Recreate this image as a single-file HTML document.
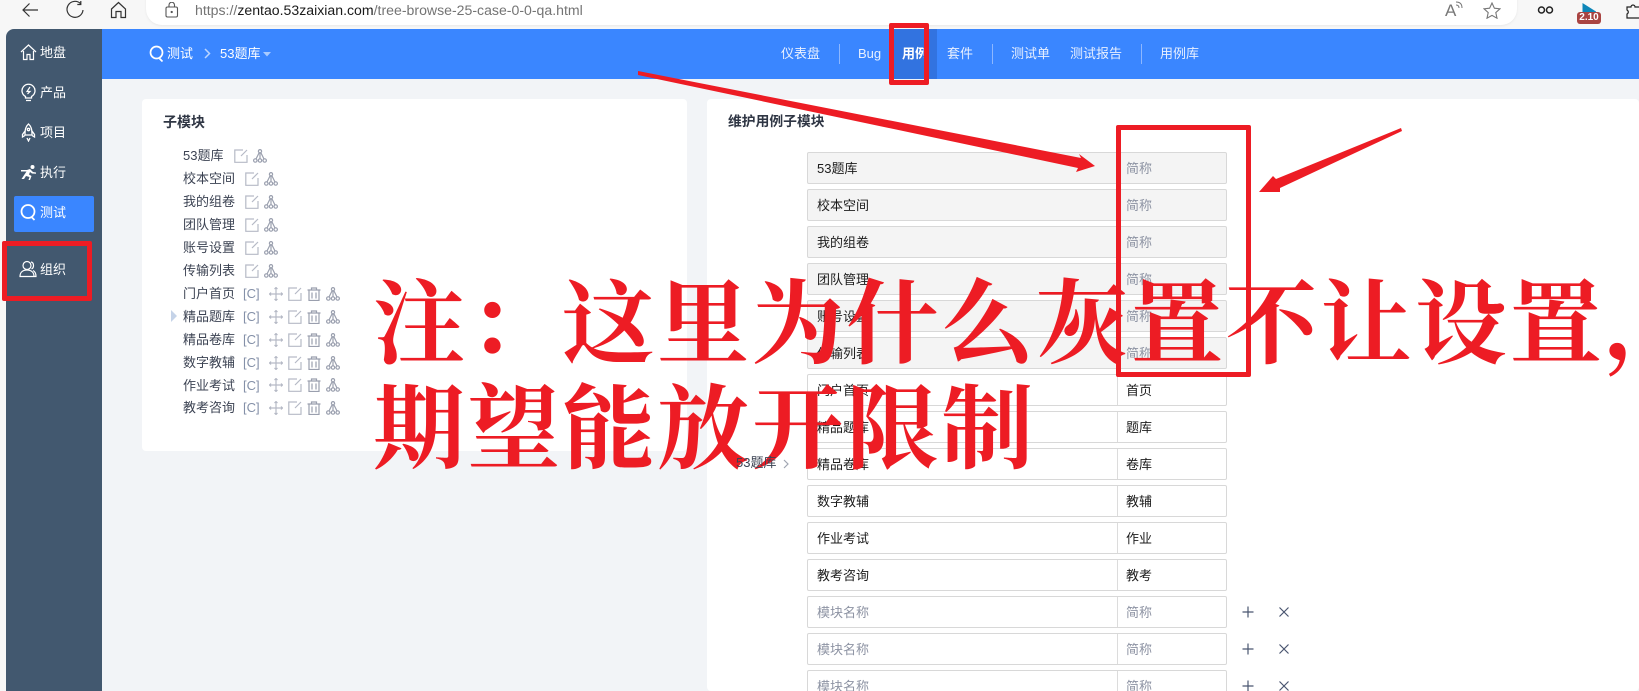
<!DOCTYPE html>
<html lang="zh"><head><meta charset="utf-8"><title>用例子模块</title>
<style>
*{box-sizing:border-box}
html,body{margin:0;padding:0;width:1639px;height:691px;overflow:hidden;background:#f7f7f7;font-family:"Liberation Sans","Noto Sans CJK SC",sans-serif;font-size:13px;color:#3c4353}
body{position:relative;contain:paint}
.a{position:absolute;white-space:nowrap}
#side{left:6px;top:29px;width:96px;height:662px;background:#42586f;border-radius:8px 0 0 0}
.ni{position:absolute;left:40px;color:#fff;font-size:13px;line-height:18px;white-space:nowrap}
#head{left:102px;top:29px;width:1537px;height:50px;background:#3a86ff}
#main{left:102px;top:79px;width:1537px;height:612px;background:#f2f4f7}
.card{background:#fff;border-radius:4px}
.nv{position:absolute;top:45px;line-height:18px;color:#e8f0ff;font-size:13px;white-space:nowrap}
.sp{position:absolute;top:44px;width:1px;height:20px;background:#8db7ff}
.t{position:absolute;left:183px;line-height:18px;color:#3c4353;white-space:nowrap}
.c{position:absolute;left:243px;line-height:18px;color:#8490a8;white-space:nowrap}
.row{position:absolute;left:807px;width:420px;height:32px;border:1px solid #d8d8d8;border-radius:2px;background:#fff;color:#1c1c1c;line-height:31px}
.row.d{background:#f4f4f4}
.row b{font-weight:400;position:absolute;left:9px;top:0}
.row i{font-style:normal;position:absolute;left:309px;top:0;height:30px;border-left:1px solid #dcdcdc;padding-left:8px;width:100px}
.row.d i{border-left-color:transparent}
.ph{color:#8d93a3}
.ic{position:absolute;fill:none;stroke:#b6bac6;stroke-width:1.2}
.big{position:absolute;left:373px;color:#ed1c24;font-family:"Noto Serif CJK SC","Liberation Serif",serif;font-weight:700;font-size:92px;letter-spacing:2.7px;line-height:105px;white-space:nowrap}
.rb{position:absolute;border:5px solid #ed1c24;border-radius:2px}
</style></head><body>
<svg width="0" height="0" style="position:absolute">
<symbol id="e" viewBox="0 0 14 14"><path d="M13 6v7.3H.8V1H9M13 1 7 7"/></symbol>
<symbol id="tr" viewBox="0 0 14 14"><circle cx="7" cy="2.2" r="1.6"/><circle cx="2.3" cy="11.5" r="1.7"/><circle cx="7" cy="11.5" r="1.7"/><circle cx="11.7" cy="11.5" r="1.7"/><path d="M7 4v6M6 4 3 10M8 4l3 6"/></symbol>
<symbol id="m" viewBox="0 0 14 14"><path d="M7 .5v13M.5 7h13M5.500 2 7 .5 8.500 2M5.500 12 7 13.500 8.500 12M2 5.500.5 7 2 8.500M12 5.500 13.500 7 12 8.500"/></symbol>
<symbol id="d" viewBox="0 0 14 14"><path d="M.5 3h13M4.500 3V1h5v2M2 3v10.500h10V3M5 5.500v6M9 5.500v6"/></symbol>
</svg>

<!-- browser chrome -->
<div class="a" style="left:146px;top:-6px;width:1371px;height:31px;background:#fff;border-radius:0 0 16px 16px;box-shadow:0 1px 2px #e8e8e8"></div>
<svg class="a" style="left:20px;top:0" width="20" height="20" fill="none" stroke="#333" stroke-width="1.2"><path d="M3 10h15M9.500 3.500 3 10l6.500 6.500"/></svg>
<svg class="a" style="left:65px;top:0" width="20" height="20" fill="none" stroke="#333" stroke-width="1.2"><path d="M15.500 3.500A8 8 0 1 0 18 10M15.800 1v3.500h-3.500"/></svg>
<svg class="a" style="left:110px;top:1px" width="17" height="18" fill="none" stroke="#333" stroke-width="1.2"><path d="M1.500 8 8.500 1.500 15.500 8v8.500h-4.500v-6h-5v6h-4.500z"/></svg>
<svg class="a" style="left:165px;top:2px" width="14" height="16" fill="none" stroke="#555" stroke-width="1.100"><rect x="1" y="5" width="11.500" height="10" rx="1.500"/><path d="M4 5V3a2.700 2.700 0 0 1 5.500 0v2"/><circle cx="6.700" cy="10" r=".6" fill="#555"/></svg>
<div class="a" style="left:195px;top:2px;font-size:14.100px;line-height:17px;color:#747474">https://<span style="color:#1a1a1a">zentao.53zaixian.com</span>/tree-browse-25-case-0-0-qa.html</div>
<div class="a" style="left:1445px;top:2px;font-size:17px;line-height:18px;color:#777">A</div>
<svg class="a" style="left:1455px;top:1px" width="9" height="11" fill="none" stroke="#777"><path d="M1 4c2 0 3 1 3 3M1 1c4 0 6 2 6 6"/></svg>
<svg class="a" style="left:1483px;top:2px" width="18" height="17" fill="none" stroke="#777" stroke-width="1.100"><path d="M9 1l2.400 5.200 5.600.6-4.200 3.800 1.200 5.600L9 13.400l-5 2.800 1.200-5.600L1 6.800l5.600-.6z"/></svg>
<svg class="a" style="left:1537px;top:5px" width="17" height="10" fill="none" stroke="#222" stroke-width="1.500"><circle cx="4.500" cy="5" r="3"/><circle cx="12.500" cy="5" r="3"/></svg>
<svg class="a" style="left:1581px;top:2px" width="16" height="11"><path d="M1.500 1 15 9.500v1.500H1.500z" fill="#0e86b8"/></svg>
<div class="a" style="left:1577px;top:12px;width:24px;height:12px;background:#a94442;border-radius:3px;color:#fff;font-size:10px;font-weight:700;line-height:12px;text-align:center">2.10</div>
<svg class="a" style="left:1626px;top:2px" width="14" height="17" fill="none" stroke="#222" stroke-width="1.200"><path d="M1 5h4a2 2 0 0 1 4 0h5v11H1v-4a2.200 2.200 0 0 0 0-4z"/></svg>

<!-- layout -->
<div class="a" id="side"></div>
<div class="a" id="head"></div>
<div class="a" id="main"></div>
<div class="a" style="left:14px;top:196px;width:80px;height:36px;background:#3a86ff;border-radius:2px"></div>

<div class="ni" style="top:44px">地盘</div>
<div class="ni" style="top:84px">产品</div>
<div class="ni" style="top:124px">项目</div>
<div class="ni" style="top:164px">执行</div>
<div class="ni" style="top:204px">测试</div>
<div class="ni" style="top:261px">组织</div>
<svg class="a" style="left:20px;top:43px" width="17" height="18" fill="none" stroke="#fff" stroke-width="1.200"><path d="M1 9 8.500 2 16 9M3.500 8v8.500h3.500v-5h3v5h3.500V8"/></svg>
<svg class="a" style="left:21px;top:83px" width="15" height="19" fill="none" stroke="#fff" stroke-width="1.300"><path d="M4.500 13.500A6.500 6.500 0 1 1 10.500 13.500V15h-6zM5 17.500h5"/><path d="M9 4 6 8.500h3L6.500 11" stroke-width="1.200"/></svg>
<svg class="a" style="left:21px;top:123px" width="15" height="19" fill="none" stroke="#fff" stroke-width="1.300"><path d="M7.500 1C4.500 3.500 4 7 4 12h7c0-5-.5-8.500-3.500-11zM4 8 1.500 11.500V14L4 12.500M11 8l2.500 3.500V14L11 12.500M6 15l1.500 3 1.500-3"/><circle cx="7.500" cy="6.500" r="1.200"/></svg>
<svg class="a" style="left:20px;top:164px" width="17" height="17" fill="#fff"><circle cx="12.500" cy="3" r="2"/><path d="M1 6h6l3-1 3 3 3 .5v1.300L12 9.500 10 8 9 10.500 11.500 12 10 16H8.500l1-3L6 12l-2 3H1.500l3-4.500L6.500 7.500H1z"/></svg>
<svg class="a" style="left:20px;top:203px" width="17" height="18" fill="none" stroke="#fff" stroke-width="1.800"><circle cx="8" cy="8.500" r="6.500"/><path d="M11.500 14l3 3"/></svg>
<svg class="a" style="left:19px;top:260px" width="18" height="18" fill="none" stroke="#fff" stroke-width="1.200"><circle cx="8" cy="5.500" r="4"/><path d="M1 16.500c0-4 2.500-6.500 7-6.500s7 2.500 7 6.500zM12 2c3 .5 3.500 5.500.5 7M14 10.500c2 1 3 3 3 6h-2"/></svg>

<!-- header -->
<svg class="a" style="left:149px;top:45px" width="16" height="17" fill="none" stroke="#fff" stroke-width="1.700"><circle cx="7.500" cy="7.500" r="6"/><path d="M10.500 13.500l3 3"/></svg>
<div class="a" style="left:167px;top:45px;line-height:18px;color:#fff">测试</div>
<svg class="a" style="left:204px;top:48px" width="7" height="11" fill="none" stroke="#bcd6ff" stroke-width="1.500"><path d="M1 1l4.500 4.500L1 10"/></svg>
<div class="a" style="left:220px;top:45px;line-height:18px;color:#fff">53题库</div>
<svg class="a" style="left:263px;top:52px" width="8" height="5"><path d="M0 0h8L4 4.500z" fill="#a9cbff"/></svg>

<div class="a" style="left:893px;top:29px;width:44px;height:50px;background:#3273e0"></div>
<div class="nv" style="left:781px">仪表盘</div>
<div class="sp" style="left:839px"></div>
<div class="nv" style="left:858px">Bug</div>
<div class="nv" style="left:902px;color:#fff;font-weight:700">用例</div>
<div class="nv" style="left:947px">套件</div>
<div class="sp" style="left:992px"></div>
<div class="nv" style="left:1011px">测试单</div>
<div class="nv" style="left:1070px">测试报告</div>
<div class="sp" style="left:1141px"></div>
<div class="nv" style="left:1160px">用例库</div>

<!-- left card -->
<div class="a card" style="left:142px;top:99px;width:545px;height:352px"></div>
<div class="a" style="left:163px;top:113px;font-size:14px;line-height:18px;font-weight:700;color:#2f3644">子模块</div>

<div class="t" style="top:147px">53题库</div>
<div class="t" style="top:170px">校本空间</div>
<div class="t" style="top:193px">我的组卷</div>
<div class="t" style="top:216px">团队管理</div>
<div class="t" style="top:239px">账号设置</div>
<div class="t" style="top:262px">传输列表</div>
<div class="t" style="top:285px">门户首页</div>
<div class="t" style="top:308px">精品题库</div>
<div class="t" style="top:331px">精品卷库</div>
<div class="t" style="top:354px">数字教辅</div>
<div class="t" style="top:377px">作业考试</div>
<div class="t" style="top:399px">教考咨询</div>
<div class="c" style="top:285px">[C]</div>
<div class="c" style="top:308px">[C]</div>
<div class="c" style="top:331px">[C]</div>
<div class="c" style="top:354px">[C]</div>
<div class="c" style="top:377px">[C]</div>
<div class="c" style="top:399px">[C]</div>
<svg class="a" style="left:171px;top:310px" width="6" height="12"><path d="M0 0l6 6-6 6z" fill="#c5d3e8"/></svg>

<svg class="ic" style="left:234px;top:149px" width="14" height="14"><use href="#e"/></svg><svg class="ic" style="left:253px;top:149px;stroke:#9a9fae" width="14" height="14"><use href="#tr"/></svg>
<svg class="ic" style="left:245px;top:172px" width="14" height="14"><use href="#e"/></svg><svg class="ic" style="left:264px;top:172px;stroke:#9a9fae" width="14" height="14"><use href="#tr"/></svg>
<svg class="ic" style="left:245px;top:195px" width="14" height="14"><use href="#e"/></svg><svg class="ic" style="left:264px;top:195px;stroke:#9a9fae" width="14" height="14"><use href="#tr"/></svg>
<svg class="ic" style="left:245px;top:218px" width="14" height="14"><use href="#e"/></svg><svg class="ic" style="left:264px;top:218px;stroke:#9a9fae" width="14" height="14"><use href="#tr"/></svg>
<svg class="ic" style="left:245px;top:241px" width="14" height="14"><use href="#e"/></svg><svg class="ic" style="left:264px;top:241px;stroke:#9a9fae" width="14" height="14"><use href="#tr"/></svg>
<svg class="ic" style="left:245px;top:264px" width="14" height="14"><use href="#e"/></svg><svg class="ic" style="left:264px;top:264px;stroke:#9a9fae" width="14" height="14"><use href="#tr"/></svg>

<svg class="ic" style="left:269px;top:287px" width="14" height="14"><use href="#m"/></svg><svg class="ic" style="left:288px;top:287px" width="14" height="14"><use href="#e"/></svg><svg class="ic" style="left:307px;top:287px;stroke:#9a9fae" width="14" height="14"><use href="#d"/></svg><svg class="ic" style="left:326px;top:287px;stroke:#9a9fae" width="14" height="14"><use href="#tr"/></svg>
<svg class="ic" style="left:269px;top:310px" width="14" height="14"><use href="#m"/></svg><svg class="ic" style="left:288px;top:310px" width="14" height="14"><use href="#e"/></svg><svg class="ic" style="left:307px;top:310px;stroke:#9a9fae" width="14" height="14"><use href="#d"/></svg><svg class="ic" style="left:326px;top:310px;stroke:#9a9fae" width="14" height="14"><use href="#tr"/></svg>
<svg class="ic" style="left:269px;top:333px" width="14" height="14"><use href="#m"/></svg><svg class="ic" style="left:288px;top:333px" width="14" height="14"><use href="#e"/></svg><svg class="ic" style="left:307px;top:333px;stroke:#9a9fae" width="14" height="14"><use href="#d"/></svg><svg class="ic" style="left:326px;top:333px;stroke:#9a9fae" width="14" height="14"><use href="#tr"/></svg>
<svg class="ic" style="left:269px;top:356px" width="14" height="14"><use href="#m"/></svg><svg class="ic" style="left:288px;top:356px" width="14" height="14"><use href="#e"/></svg><svg class="ic" style="left:307px;top:356px;stroke:#9a9fae" width="14" height="14"><use href="#d"/></svg><svg class="ic" style="left:326px;top:356px;stroke:#9a9fae" width="14" height="14"><use href="#tr"/></svg>
<svg class="ic" style="left:269px;top:378px" width="14" height="14"><use href="#m"/></svg><svg class="ic" style="left:288px;top:378px" width="14" height="14"><use href="#e"/></svg><svg class="ic" style="left:307px;top:378px;stroke:#9a9fae" width="14" height="14"><use href="#d"/></svg><svg class="ic" style="left:326px;top:378px;stroke:#9a9fae" width="14" height="14"><use href="#tr"/></svg>
<svg class="ic" style="left:269px;top:401px" width="14" height="14"><use href="#m"/></svg><svg class="ic" style="left:288px;top:401px" width="14" height="14"><use href="#e"/></svg><svg class="ic" style="left:307px;top:401px;stroke:#9a9fae" width="14" height="14"><use href="#d"/></svg><svg class="ic" style="left:326px;top:401px;stroke:#9a9fae" width="14" height="14"><use href="#tr"/></svg>

<!-- right card -->
<div class="a card" style="left:707px;top:99px;width:932px;height:592px"></div>
<div class="a" style="left:728px;top:113px;font-size:13.800px;line-height:18px;font-weight:700;color:#2f3644">维护用例子模块</div>

<div class="row d" style="top:152px"><b>53题库</b><i class="ph">简称</i></div>
<div class="row d" style="top:189px"><b>校本空间</b><i class="ph">简称</i></div>
<div class="row d" style="top:226px"><b>我的组卷</b><i class="ph">简称</i></div>
<div class="row d" style="top:263px"><b>团队管理</b><i class="ph">简称</i></div>
<div class="row d" style="top:300px"><b>账号设置</b><i class="ph">简称</i></div>
<div class="row d" style="top:337px"><b>传输列表</b><i class="ph">简称</i></div>
<div class="row" style="top:374px"><b>门户首页</b><i>首页</i></div>
<div class="row" style="top:411px"><b>精品题库</b><i>题库</i></div>
<div class="row" style="top:448px"><b>精品卷库</b><i>卷库</i></div>
<div class="row" style="top:485px"><b>数字教辅</b><i>教辅</i></div>
<div class="row" style="top:522px"><b>作业考试</b><i>作业</i></div>
<div class="row" style="top:559px"><b>教考咨询</b><i>教考</i></div>
<div class="row" style="top:596px"><b class="ph">模块名称</b><i class="ph">简称</i></div>
<div class="row" style="top:633px"><b class="ph">模块名称</b><i class="ph">简称</i></div>
<div class="row" style="top:670px"><b class="ph">模块名称</b><i class="ph">简称</i></div>

<svg class="a" style="left:1242px;top:606px" width="50" height="12" fill="none" stroke="#4a5670" stroke-width="1.200"><path d="M6 .5v11M.5 6h11M37.500 1.500l9 9M46.500 1.500l-9 9"/></svg>
<svg class="a" style="left:1242px;top:643px" width="50" height="12" fill="none" stroke="#4a5670" stroke-width="1.200"><path d="M6 .5v11M.5 6h11M37.500 1.500l9 9M46.500 1.500l-9 9"/></svg>
<svg class="a" style="left:1242px;top:680px" width="50" height="11" fill="none" stroke="#4a5670" stroke-width="1.200"><path d="M6 .5v11M.5 6h11M37.500 1.500l9 9M46.500 1.500l-9 9"/></svg>

<!-- annotations -->
<div class="rb" style="left:2px;top:241px;width:90px;height:60px"></div>
<div class="rb" style="left:889px;top:23px;width:40px;height:62px"></div>
<div class="rb" style="left:1116px;top:125px;width:135px;height:252px"></div>
<svg class="a" style="left:0;top:0" width="1639" height="691">
<path d="M638 71 1081 158 1079 154 1095 166 1076 172 1078 168 638 75Z" fill="#ed1c24"/>
<path d="M1401 128 1276 179 1273 176 1259 192 1280 192 1280 188 1402 131Z" fill="#ed1c24"/>
</svg>
<div class="big" style="top:265px">注：这里为什么灰置不让设置，</div>
<div class="big" style="top:370px">期望能放开限制</div>
<div class="a" style="left:736px;top:454px;line-height:18px;color:#3c4353">53题库</div>
<svg class="a" style="left:783px;top:459px" width="7" height="10" fill="none" stroke="#a0a5b2" stroke-width="1.200"><path d="M1 1l4 4-4 4"/></svg>
</body></html>
